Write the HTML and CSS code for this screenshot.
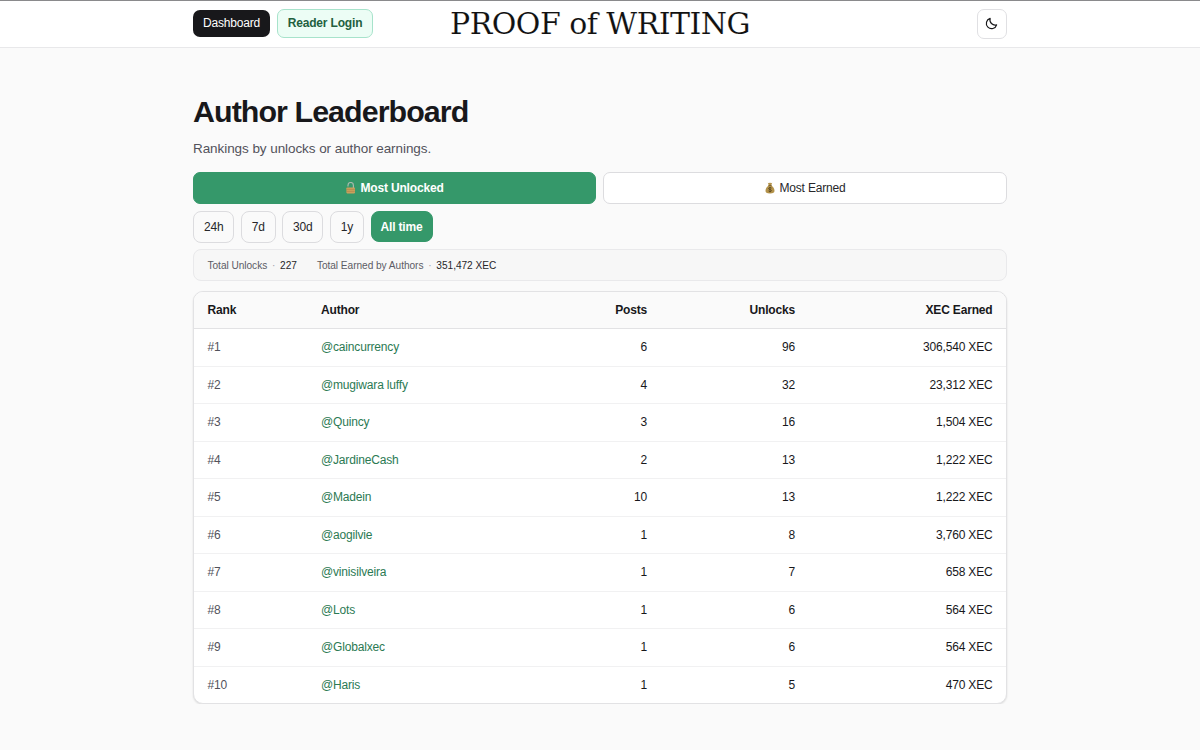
FILE: index.html
```html
<!DOCTYPE html>
<html lang="en">
<head>
    <meta charset="UTF-8">
    <meta name="viewport" content="width=device-width, initial-scale=1.0">
    <title>Author Leaderboard</title>
    <link rel="stylesheet" href="styles.css">
</head>
<body>
    <header class="topbar">
        <div class="topbar-inner">
            <nav class="nav">
                <a href="#" class="nav-button dark">Dashboard</a>
                <a href="#" class="nav-button login">Reader Login</a>
            </nav>
            <a href="#" class="logo">PROOF of WRITING</a>
            <button class="theme-toggle" aria-label="Toggle theme">
                <svg viewBox="0 0 24 24" fill="none" stroke="currentColor" stroke-width="2.2" stroke-linecap="round" stroke-linejoin="round">
                    <path d="M21.5 14.5A9.7 9.7 0 1 1 9.5 2.5 9.7 9.7 0 0 0 21.5 14.5z"/>
                </svg>
            </button>
        </div>
    </header>

    <main class="page">
        <h1>Author Leaderboard</h1>
        <p class="subtitle">Rankings by unlocks or author earnings.</p>

        <div class="tabs">
            <button class="tab active">
                <svg class="tab-icon" viewBox="0 0 12 12">
                    <path d="M3 4.6V3.2a2.7 2.7 0 0 1 5.4 0V6" fill="none" stroke="#a9b9ad" stroke-width="1.2"/>
                    <rect x="1.4" y="5.4" width="8.6" height="6" rx="0.8" fill="#c9a05c"/>
                    <path d="M1.6 7.4h8.2M1.6 9.4h8.2" stroke="#a98149" stroke-width="0.6"/>
                </svg>
                Most Unlocked
            </button>
            <button class="tab">
                <svg class="tab-icon" viewBox="0 0 12 12">
                    <path d="M3.8 0.8l1.2.5 1-.7 1 .7 1.2-.5-1 2.7c2 1.2 3.3 3.2 3.3 5.3 0 1.9-1.2 2.7-4.5 2.7S1.5 10.7 1.5 8.8c0-2.1 1.3-4.1 3.3-5.3z" fill="#b3924a"/>
                    <path d="M4.3 3.6h3.4" stroke="#6f5525" stroke-width="0.8"/>
                    <path d="M7.5 6.1c-.4-.5-2.9-.8-2.9.5s2.9.7 2.9 2-2.6 1.1-3 .3M6 5v5.2" fill="none" stroke="#4b3a1b" stroke-width="0.7"/>
                </svg>
                Most Earned
            </button>
        </div>

        <div class="periods">
            <button class="period">24h</button>
            <button class="period">7d</button>
            <button class="period">30d</button>
            <button class="period">1y</button>
            <button class="period active">All time</button>
        </div>

        <div class="totals">
            <div>Total Unlocks <span class="dot">·</span> <span class="total">227</span></div>
            <div>Total Earned by Authors <span class="dot">·</span> <span class="total">351,472 XEC</span></div>
        </div>

        <div class="table-card">
            <table>
                <colgroup>
                    <col class="col-rank">
                    <col>
                    <col class="col-posts">
                    <col class="col-unlocks">
                    <col class="col-earned">
                </colgroup>
                <thead>
                    <tr><th>Rank</th><th>Author</th><th>Posts</th><th>Unlocks</th><th>XEC Earned</th></tr>
                </thead>
                <tbody>
                    <tr><td>#1</td><td><a href="#">@caincurrency</a></td><td>6</td><td>96</td><td>306,540 XEC</td></tr>
                    <tr><td>#2</td><td><a href="#">@mugiwara luffy</a></td><td>4</td><td>32</td><td>23,312 XEC</td></tr>
                    <tr><td>#3</td><td><a href="#">@Quincy</a></td><td>3</td><td>16</td><td>1,504 XEC</td></tr>
                    <tr><td>#4</td><td><a href="#">@JardineCash</a></td><td>2</td><td>13</td><td>1,222 XEC</td></tr>
                    <tr><td>#5</td><td><a href="#">@Madein</a></td><td>10</td><td>13</td><td>1,222 XEC</td></tr>
                    <tr><td>#6</td><td><a href="#">@aogilvie</a></td><td>1</td><td>8</td><td>3,760 XEC</td></tr>
                    <tr><td>#7</td><td><a href="#">@vinisilveira</a></td><td>1</td><td>7</td><td>658 XEC</td></tr>
                    <tr><td>#8</td><td><a href="#">@Lots</a></td><td>1</td><td>6</td><td>564 XEC</td></tr>
                    <tr><td>#9</td><td><a href="#">@Globalxec</a></td><td>1</td><td>6</td><td>564 XEC</td></tr>
                    <tr><td>#10</td><td><a href="#">@Haris</a></td><td>1</td><td>5</td><td>470 XEC</td></tr>
                </tbody>
            </table>
        </div>
    </main>
</body>
</html>
```
FILE: styles.css
```css
* {
    box-sizing: border-box;
}
body {
    margin: 0;
    background: #fafafa;
    color: #18181b;
    font-family: "Liberation Sans", Arial, sans-serif;
    font-size: 12px;
    letter-spacing: -0.17px;
}
a {
    text-decoration: none;
}
button {
    font: inherit;
    color: inherit;
    letter-spacing: inherit;
    margin: 0;
}

/* Header */
.topbar {
    height: 48px;
    background: #fff;
    border-top: 1px solid #8a8a8c;
    border-bottom: 1px solid #e8e8ea;
}
.topbar-inner {
    width: 814px;
    height: 44px;
    margin: 0 auto;
    display: grid;
    grid-template-columns: 1fr auto 1fr;
    align-items: center;
}
.nav {
    display: flex;
    align-items: center;
    gap: 7px;
}
.nav-button {
    display: flex;
    align-items: center;
    justify-content: center;
    width: 77px;
    height: 27px;
    padding-bottom: 1px;
    border-radius: 7px;
}
.nav-button.dark {
    background: #18181b;
    color: #fff;
}
.nav-button.login {
    width: 96px;
    height: 29px;
    border: 1px solid #a7e3cb;
    background: #ecfdf5;
    color: #22603f;
    font-weight: bold;
}
.logo {
    width: 300px;
    font-family: "DejaVu Serif", serif;
    font-size: 30px;
    line-height: 45px;
    letter-spacing: -0.52px;
    white-space: nowrap;
    text-align: center;
    color: #111;
    -webkit-text-stroke: 0.12px #fff;
}
.theme-toggle {
    justify-self: end;
    display: flex;
    align-items: center;
    justify-content: center;
    width: 30px;
    height: 30px;
    padding: 0 1px 1px 0;
    border: 1px solid #e0e0e3;
    border-radius: 7px;
    background: #fff;
}
.theme-toggle svg {
    width: 13px;
    height: 13px;
}

/* Page */
.page {
    width: 814px;
    margin: 0 auto;
    padding-top: 45px;
}
h1 {
    margin: 0;
    font-size: 30.4px;
    line-height: 36px;
    letter-spacing: -0.93px;
}
.subtitle {
    margin: 10px 0 14px;
    font-size: 13.5px;
    line-height: 19px;
    letter-spacing: -0.07px;
    color: #52525b;
}

.tabs {
    display: grid;
    grid-template-columns: 403px 404px;
    gap: 7px;
}
.tab {
    display: flex;
    align-items: center;
    justify-content: center;
    gap: 3px;
    height: 32px;
    padding: 0;
    border: 1px solid #dcdcdf;
    border-radius: 7px;
    background: #fff;
    color: #27272a;
}
.tab-icon {
    width: 12px;
    height: 12px;
}
.active {
    border-color: #35986a;
    background: #35986a;
    color: #fff;
    font-weight: bold;
}

.periods {
    display: flex;
    gap: 6.5px;
    margin-top: 7px;
}
.period {
    height: 32px;
    padding: 0 9.9px;
    border: 1px solid #dcdcdf;
    border-radius: 8px;
    background: #fafafa;
    color: #27272a;
}
.period.active {
    height: 31px;
    padding: 0 9px;
    border-color: #35986a;
    background: #35986a;
    color: #fff;
}

.totals {
    display: flex;
    gap: 20px;
    align-items: center;
    height: 32px;
    margin-top: 6px;
    padding: 0 13.5px;
    border: 1px solid #e9e9eb;
    border-radius: 8px;
    background: #f7f7f7;
    font-size: 10.15px;
    letter-spacing: -0.04px;
    color: #5c5c65;
}
.dot {
    margin: 0 2px;
    color: #a1a1aa;
}
.total {
    color: #27272a;
}

/* Leaderboard table */
.table-card {
    margin-top: 10px;
    overflow: hidden;
    border: 1px solid #e2e2e4;
    border-radius: 10px;
    background: #fff;
    box-shadow: 0 1px 2px rgba(0, 0, 0, 0.12);
}
table {
    width: 100%;
    table-layout: fixed;
    border-collapse: separate;
    border-spacing: 0;
}
.col-rank {
    width: 113.5px;
}
.col-posts {
    width: 120px;
}
.col-unlocks {
    width: 148px;
}
.col-earned {
    width: 197.5px;
}
th, td {
    height: 37.5px;
    padding: 0 13.5px;
    text-align: left;
    border-bottom: 1px solid #f1f1f2;
}
th {
    height: 37px;
    background: #fafafa;
    border-bottom-color: #e2e2e4;
}
th:nth-child(n+3), td:nth-child(n+3) {
    text-align: right;
}
td:first-child {
    color: #52525b;
}
td a {
    color: #2b7a53;
}
tbody tr:last-child td {
    height: 36.5px;
    border-bottom: none;
}
```
